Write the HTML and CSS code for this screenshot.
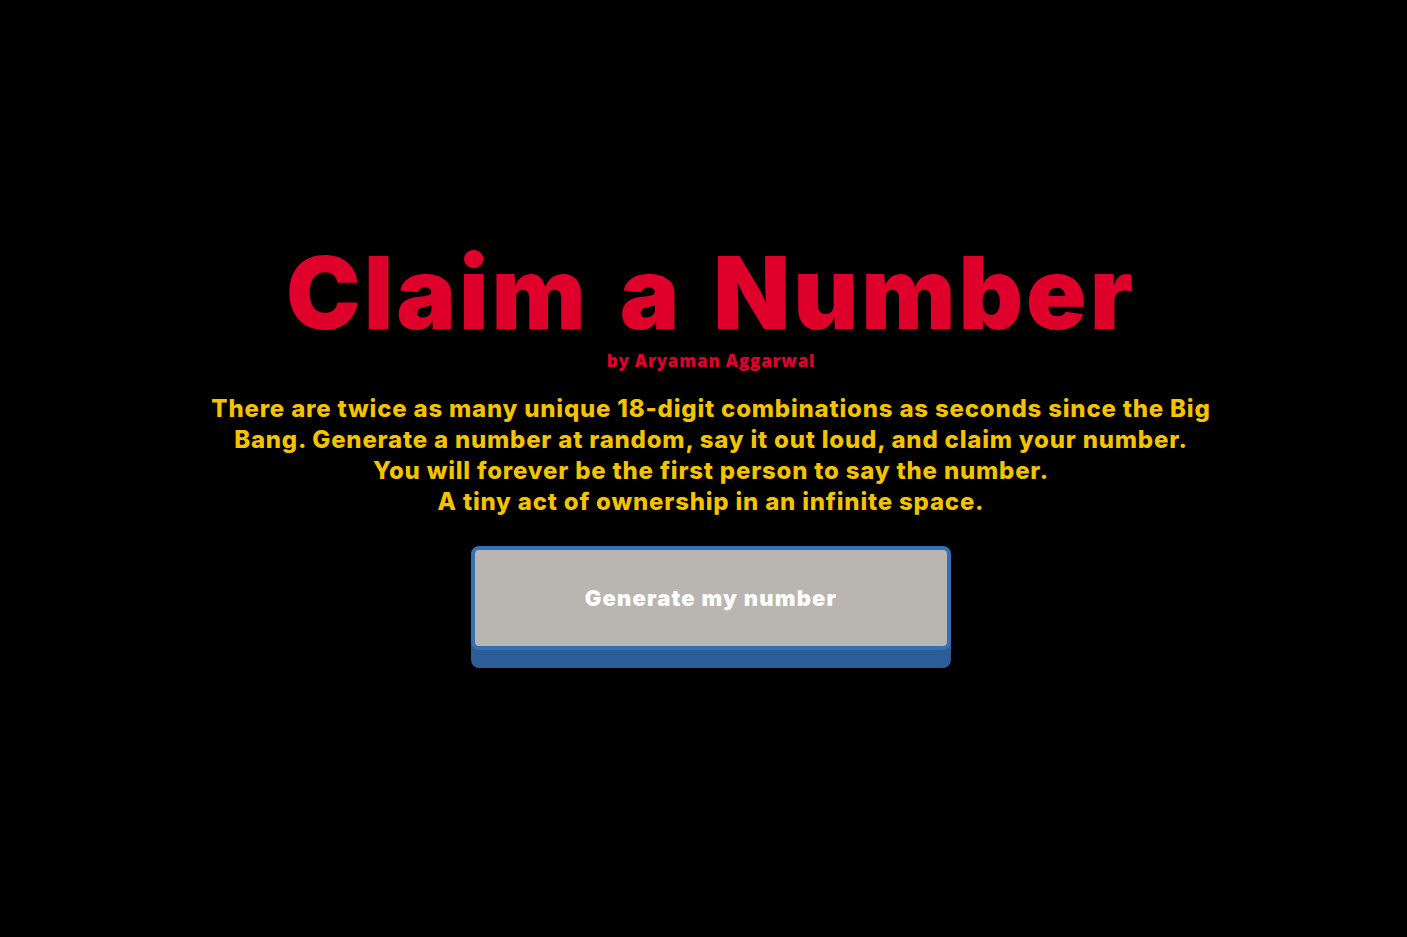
FILE: index.html
```html
<!DOCTYPE html>
<html lang="en">
<head>
<meta charset="utf-8">
<title>Claim a Number</title>
<link rel="stylesheet" href="styles.css">
</head>
<body>
<main class="page">
  <h1 class="title">Claim a Number</h1>
  <p class="byline">by Aryaman Aggarwal</p>
  <p class="intro">There are twice as many unique 18-digit combinations as seconds since the Big Bang. Generate a number at random, say it out loud, and claim your number.<br>You will forever be the first person to say the number.<br>A tiny act of ownership in an infinite space.</p>
  <button class="generate" type="button">Generate my number</button>
</main>
</body>
</html>
```
FILE: styles.css
```css
* { box-sizing: border-box; }

html, body {
  margin: 0;
  height: 100%;
  background: #000;
}

body {
  font-family: Inter, "Open Sans", "Liberation Sans", sans-serif;
}

.page {
  min-height: 100vh;
  display: flex;
  flex-direction: column;
  align-items: center;
  padding: 241px 0 0 15px;
  text-align: center;
}

.title {
  margin: 0;
  color: #de002b;
  font-size: 100px;
  font-weight: 900;
  line-height: 104px;
  letter-spacing: 3px;
  word-spacing: 8px;
}

.byline {
  margin: 5px 0 0;
  color: #de002b;
  font-family: "Open Sans", sans-serif;
  font-size: 17px;
  font-weight: 800;
  line-height: 22px;
  letter-spacing: 0.8px;
}

.intro {
  margin: 21px 0 0;
  max-width: 1010px;
  color: #f3c300;
  font-size: 24px;
  font-weight: 800;
  line-height: 31px;
  letter-spacing: 0.8px;
}

.generate {
  margin: 29px 0 18px;
  width: 480px;
  height: 104px;
  border: 4px solid #3370b6;
  border-radius: 8px;
  background: #b9b5b0;
  box-shadow: 0 18px 0 #2c5d96;
  color: #fff;
  font-family: inherit;
  font-size: 22px;
  font-weight: 900;
  letter-spacing: 1.2px;
  cursor: pointer;
}
```
